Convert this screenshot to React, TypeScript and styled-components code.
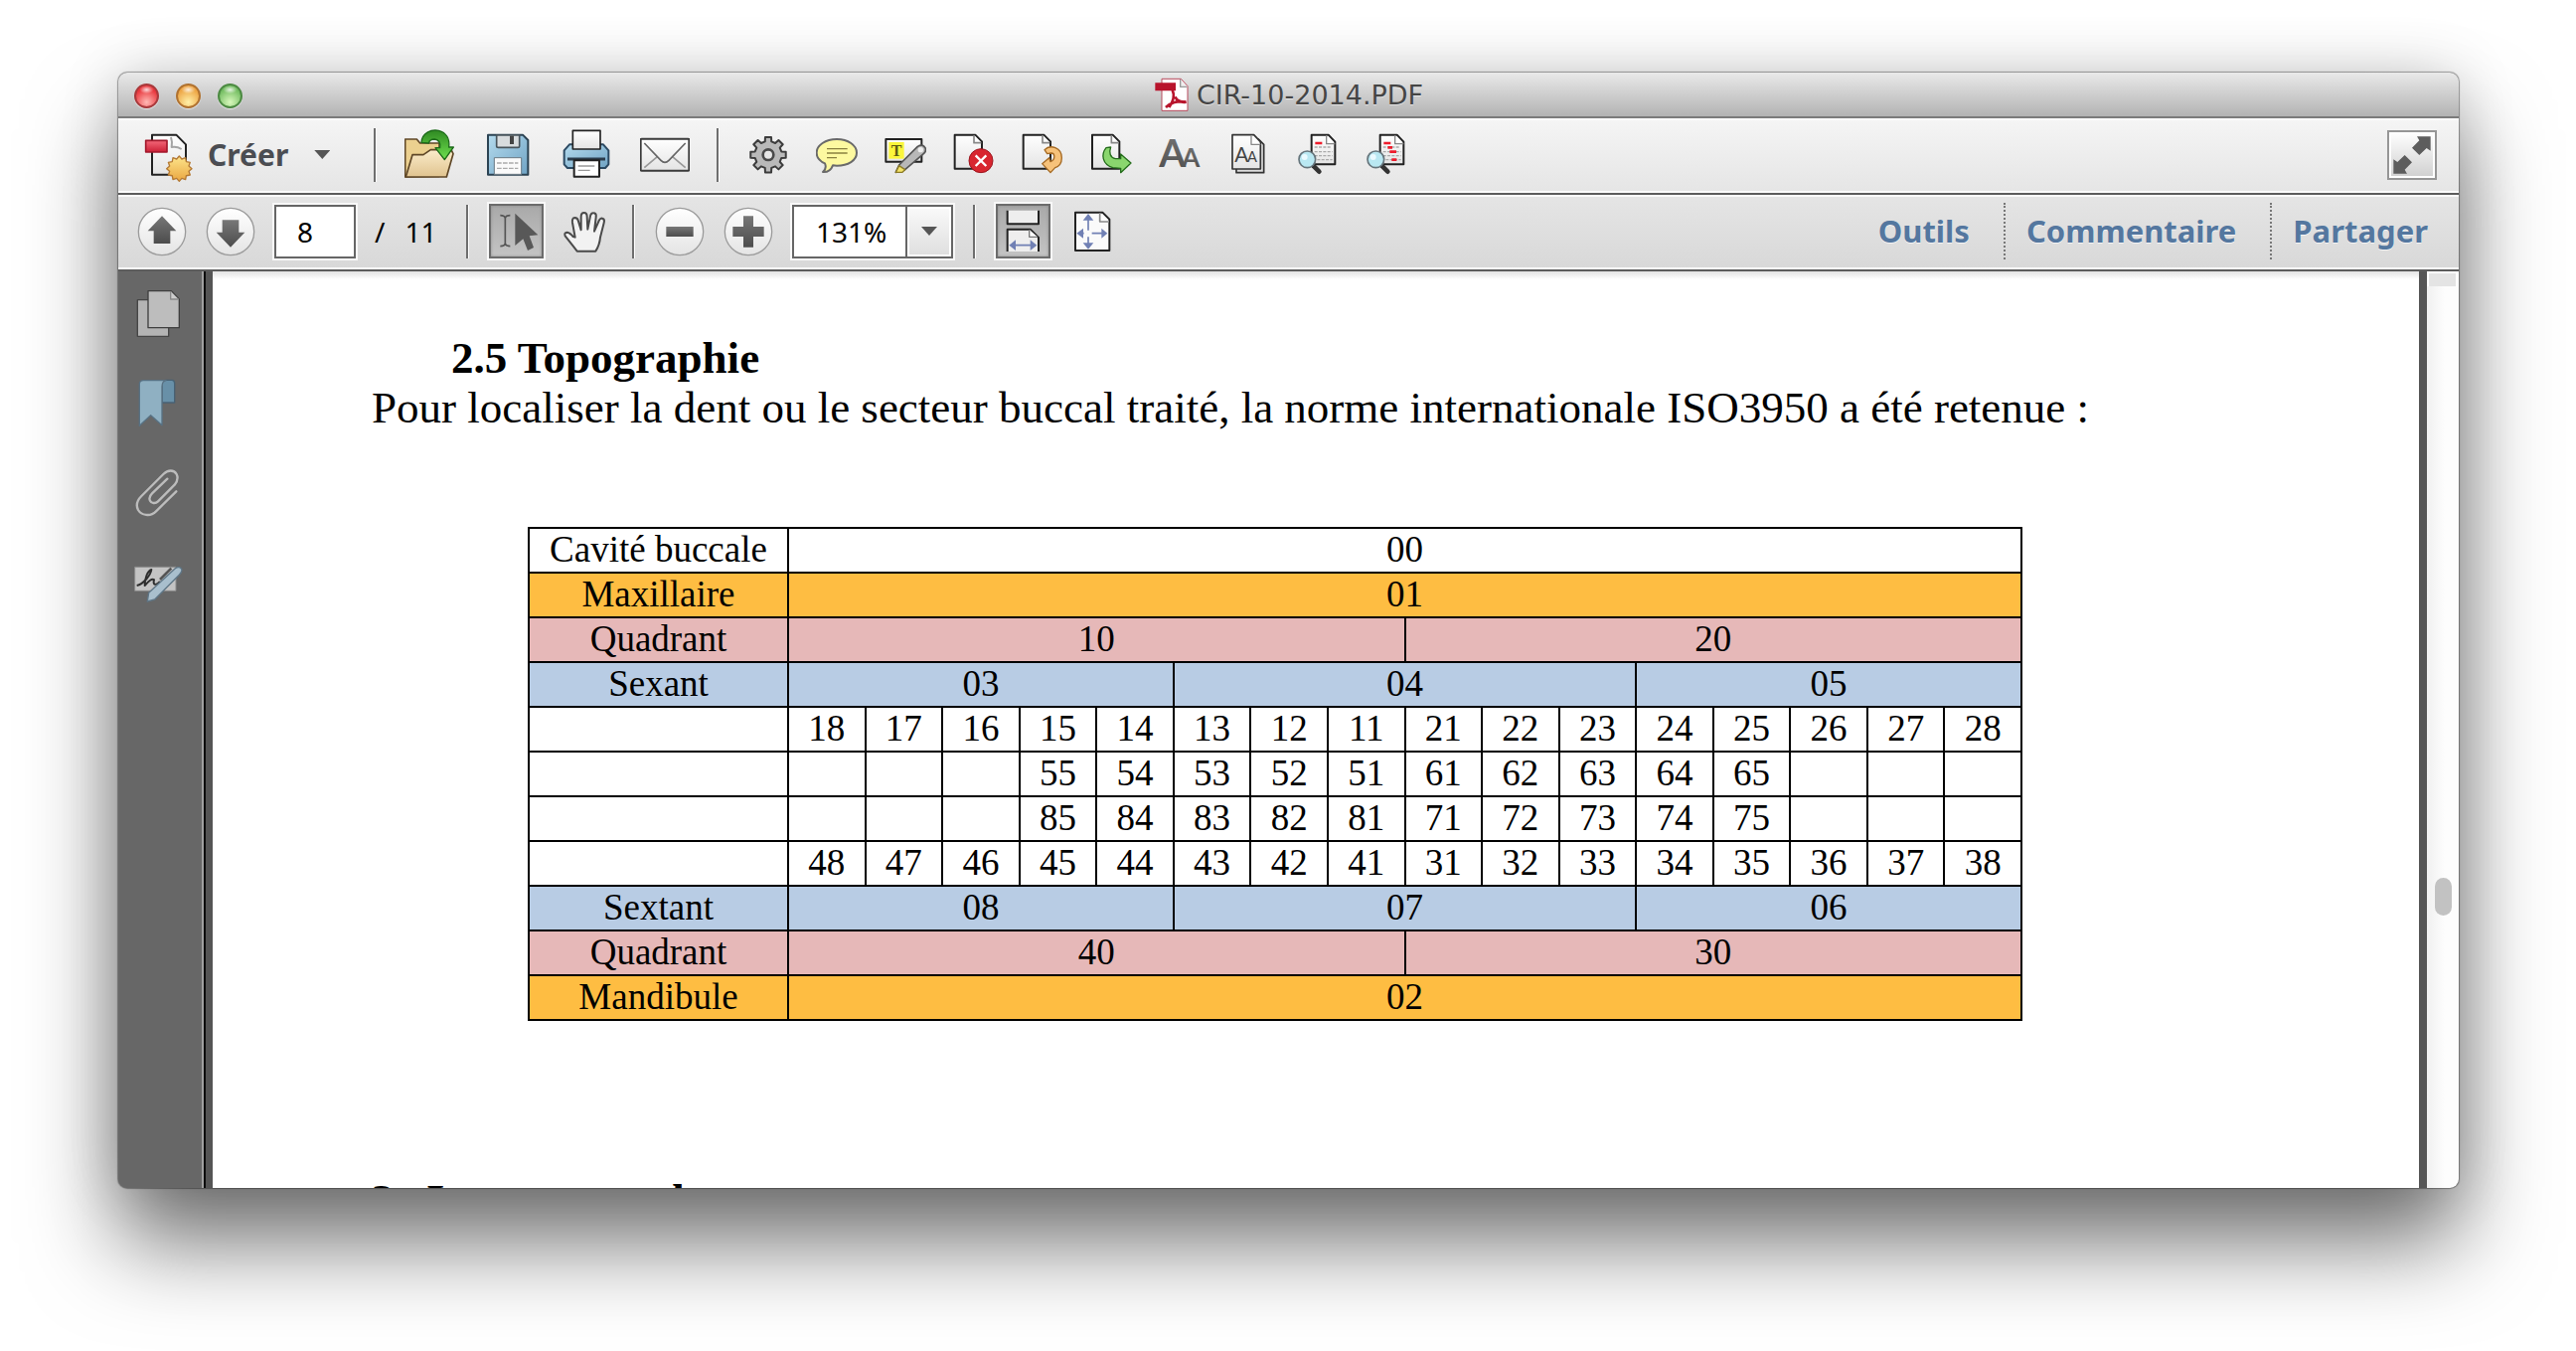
import React from "react";
import styled, { createGlobalStyle, css } from "styled-components";

const uiFont = `"Noto Sans", "Open Sans", sans-serif`;
const docFont = `"Liberation Serif", "Times New Roman", serif`;

const GlobalStyle = createGlobalStyle`
  *, *::before, *::after { box-sizing: border-box; }
  body { margin: 0; background: #fff; }
  button, input, select { margin: 0; font: inherit; color: inherit; }
`;

const Desktop = styled.main`
  display: flex;
  height: 100vh;
  padding: 73px 118px 164px 119px;
  overflow: hidden;
`;

const Window = styled.section`
  flex: 1;
  display: flex;
  flex-direction: column;
  min-width: 0;
  overflow: hidden;
  border-radius: 9px;
  background: #676767;
  font-family: ${uiFont};
  box-shadow: 0 0 1px 1px rgba(0, 0, 0, 0.35), 0 56px 90px rgba(0, 0, 0, 0.54), 0 0 60px rgba(0, 0, 0, 0.16);
`;

/* ---------- title bar ---------- */

const TitleBar = styled.header`
  display: grid;
  grid-template-columns: 1fr auto 1fr;
  align-items: center;
  height: 46px;
  padding: 2px 16px 0;
  background: linear-gradient(#e9e9e9, #b3b3b3);
  border-bottom: 2px solid #7b7b7b;
`;

const Lights = styled.div`
  display: flex;
  gap: 17px;
`;

const Light = styled.button<{ $rim: string; $core: string; $glow: string }>`
  width: 25px;
  height: 25px;
  padding: 0;
  border: 2px solid ${(p) => p.$rim};
  border-radius: 50%;
  background: radial-gradient(ellipse 7px 4px at 50% 20%, #ffffffd0, #ffffff00),
    radial-gradient(circle at 50% 80%, ${(p) => p.$glow}, ${(p) => p.$core} 70%);
  box-shadow: 0 1px 1px #ffffffa0;
`;

const Title = styled.h1`
  display: flex;
  align-items: center;
  gap: 7px;
  margin: 0;
  font: 400 27px/32px "DejaVu Sans", sans-serif;
  color: #454545;
  text-shadow: 0 1px 0 #ffffff90;
`;

/* ---------- toolbars ---------- */

const Toolbar = styled.div<{ $dark?: boolean }>`
  display: flex;
  align-items: center;
  height: 77px;
  padding: 0 22px 2px 19px;
  border-bottom: 2px solid #5c5c5c;
  background: ${(p) => (p.$dark ? "linear-gradient(#e5e5e5, #d8d8d8)" : "linear-gradient(#f5f5f5, #e5e5e5)")};
  box-shadow: inset 0 2px 0 #fbfbfb, inset 0 -2px 0 #fbfbfb;
  gap: ${(p) => (p.$dark ? "19px" : "0")};
`;

const Divider = styled.span<{ $wide?: boolean }>`
  flex: none;
  width: 3px;
  height: 54px;
  margin: ${(p) => (p.$wide ? "0 28px 0 27px" : "0 1px")};
  background: #6e6e6e;
  border-right: 1px solid #fff;
`;

const IconButton = styled.button<{ $pressed?: boolean }>`
  flex: none;
  display: grid;
  place-items: center;
  padding: 0;
  border: 0;
  background: none;
  svg { display: block; }
  ${(p) =>
    p.$pressed &&
    css`
      width: 55px;
      height: 55px;
      border: 2px solid #6c6c6c;
      background: linear-gradient(#a9a9a9, #c4c4c4);
      box-shadow: 0 0 0 2px #f8f8f8, inset 0 0 3px #8a8a8a;
    `}
`;

const Group = styled.div<{ $gap: number }>`
  display: flex;
  align-items: center;
  gap: ${(p) => p.$gap}px;
`;

const CreateButton = styled.button`
  display: flex;
  align-items: center;
  gap: 15px;
  padding: 0 17px 0 0;
  border: 0;
  background: none;
  font: 700 30px/40px ${uiFont};
  color: #4b4d52;
`;

const Caret = styled.span`
  width: 16px;
  height: 9px;
  margin-left: 11px;
  background: #555;
  clip-path: polygon(0 0, 100% 0, 50% 100%);
`;

const FullScreen = styled(IconButton)`
  width: 50px;
  height: 50px;
  margin-left: auto;
  border: 2px solid #969696;
  background: linear-gradient(#fff, #cfcfcf);
  box-shadow: inset 0 0 0 2px #fff;
`;

const PageInput = styled.input`
  flex: none;
  width: 82px;
  height: 54px;
  padding: 0 0 0 21px;
  border: 2px solid #666;
  border-radius: 0;
  background: #fff;
  box-shadow: 0 0 0 2px #f8f8f8;
  font-size: 28px;
  color: #000;
`;

const PageTotal = styled.div`
  flex: none;
  display: flex;
  gap: 20px;
  width: 72px;
  font-size: 28px;
  line-height: 40px;
`;

const ZoomBox = styled.div`
  flex: none;
  position: relative;
  width: 162px;
  height: 54px;
  border: 2px solid #666;
  background: #fff;
  box-shadow: 0 0 0 2px #f8f8f8;
`;

const ZoomSelect = styled.select`
  width: 100%;
  height: 100%;
  padding: 0 0 0 22px;
  border: 0;
  appearance: none;
  background: transparent;
  font-size: 28px;
  color: #000;
`;

const ZoomArrow = styled.span`
  position: absolute;
  inset: 0 0 0 auto;
  display: grid;
  place-items: center;
  width: 46px;
  border-left: 2px solid #666;
  background: linear-gradient(#fafafa, #dedede);
  box-shadow: inset 0 0 0 2px #fff;
  pointer-events: none;
  ${Caret} { margin: 0; }
`;

const Panes = styled.nav`
  display: flex;
  align-items: center;
  margin-left: auto;
  padding-right: 9px;
`;

const PaneLink = styled.a`
  padding: 0 34px 0 21px;
  font: 700 31px/57px ${uiFont};
  color: #54779f;
  text-decoration: none;
  text-shadow: 0 1px 0 #ffffffb0;
  & + & { border-left: 2px dotted #777; }
  &:last-child { padding-right: 0; }
`;

/* ---------- body ---------- */

const Body = styled.div`
  flex: 1;
  display: flex;
  min-height: 0;
`;

const Sidebar = styled.aside`
  flex: none;
  display: flex;
  flex-direction: column;
  gap: 40px;
  width: 95px;
  padding: 18px 0 0 15px;
  background: linear-gradient(90deg, #676767 84px, #a0a0a0 84px, #a0a0a0 86px, #0c0c0c 86px, #0c0c0c 88px, #555 88px);
  ${IconButton} { justify-content: start; }
`;

const Page = styled.article`
  flex: 1;
  min-width: 0;
  overflow: hidden;
  padding: 62px 160px 0;
  background: linear-gradient(#e2e2e2, #fff 8px);
  font: 45px/50px ${docFont};
  color: #000;
`;

const SectionTitle = styled.h2`
  margin: 0;
  padding-left: 80px;
  font: inherit;
  font-weight: 700;
`;

const NextSection = styled.h2`
  display: flex;
  gap: 22px;
  margin: 155px 0 0;
  font: inherit;
  font-weight: 700;
  white-space: nowrap;
`;

const Paragraph = styled.p`
  margin: 0 0 95px;
  white-space: nowrap;
`;

const TeethTable = styled.table`
  width: 1504px;
  margin-left: 157px;
  border-collapse: collapse;
  table-layout: fixed;
  font-size: 37px;
  line-height: 40px;
  text-align: center;
`;

const LabelCol = styled.col`
  width: 261px;
`;

const tones = { plain: "#fff", orange: "#febd42", pink: "#e6b8b8", blue: "#b8cce4" };
type Tone = keyof typeof tones;

const Row = styled.tr<{ $tone: Tone }>`
  height: 45px;
  background: ${(p) => tones[p.$tone]};
  th, td {
    padding: 0 0 2px;
    border: 2px solid #000;
    font-weight: 400;
  }
`;

const ScrollTrack = styled.div`
  flex: none;
  width: 40px;
  padding-left: 8px;
  background: linear-gradient(90deg, #555 8px, #f0f0f0 8px, #fdfdfd 26px);
`;

const Splitter = styled.div`
  height: 15px;
  border: solid #fff;
  border-width: 2px 3px 0 2px;
  background: #e4e4e4;
`;

const Thumb = styled.div`
  width: 17px;
  height: 38px;
  margin: 595px 0 0 8px;
  border-radius: 9px;
  background: #c2c2c2;
`;

/* ---------- icons ---------- */

type IconProps = { x: number; y: number; w?: number; h?: number; children: React.ReactNode };

/* Artwork is drawn on a grid three times finer than the screen. */
const Icon = ({ x, y, w = 50, h = 54, children }: IconProps) => (
  <svg width={w} height={h} viewBox={`${x} ${y} ${w * 3} ${h * 3}`} fill="none" strokeLinejoin="round" aria-hidden="true">
    {children}
  </svg>
);

const HiddenSvg = styled.svg`
  position: absolute;
`;

const Gradients = () => (
  <HiddenSvg width="0" height="0" aria-hidden="true">
    <defs>
      <linearGradient id="paper" x1="0" y1="0" x2="0" y2="1"><stop stopColor="#fff" /><stop offset="1" stopColor="#e4e4e4" /></linearGradient>
      <linearGradient id="steel" x1="0" y1="0" x2="0" y2="1"><stop stopColor="#777" /><stop offset="1" stopColor="#4c4c4c" /></linearGradient>
      <linearGradient id="manila" x1="0" y1="0" x2="0" y2="1"><stop stopColor="#fbeccb" /><stop offset="1" stopColor="#e0c38f" /></linearGradient>
      <linearGradient id="green" x1="0" y1="0" x2="0" y2="1"><stop stopColor="#2f8a22" /><stop offset="1" stopColor="#6fe04f" /></linearGradient>
      <linearGradient id="blue" x1="0" y1="0" x2="1" y2="1"><stop stopColor="#b5dbee" /><stop offset="1" stopColor="#6fa3c4" /></linearGradient>
      <linearGradient id="gold" x1="0" y1="0" x2="0" y2="1"><stop stopColor="#fde58c" /><stop offset="1" stopColor="#eaa640" /></linearGradient>
      <linearGradient id="red" x1="0" y1="0" x2="0" y2="1"><stop stopColor="#f4697a" /><stop offset="1" stopColor="#cc1f35" /></linearGradient>
    </defs>
  </HiddenSvg>
);

const SheetBase = ({ x, y }: { x: number; y: number }) => (
  <g transform={`translate(${x} ${y})`}>
    <path d="M2 2H64L84 22V104H2Z" fill="url(#paper)" stroke="#222" strokeWidth="6" />
    <path d="M60 4V26H82" fill="#fff" stroke="#888" strokeWidth="5" />
  </g>
);

const PdfIcon = () => (
  <Icon x={280} y={54} w={36} h={36}>
    <path d="M304 58H362L382 80V154H304Z" fill="#fff" stroke="#b84a5c" strokeWidth="3" />
    <path d="M360 60V82H380" fill="#eee" stroke="#999" strokeWidth="4" />
    <path d="M284 70H346V94H284Z" fill="#b8142c" />
    <path d="M336 92C342 104 344 118 326 144M316 144C328 132 352 122 376 128M344 112C350 124 362 130 378 128" stroke="#b8142c" strokeWidth="8" />
  </Icon>
);

const sunPoints = Array.from({ length: 24 }, (_, i) => {
  const r = i % 2 ? 30 : 38;
  const a = (i * Math.PI) / 12;
  return `${(241 + r * Math.sin(a)).toFixed(1)},${(331 - r * Math.cos(a)).toFixed(1)}`;
}).join(" ");

const CreateIcon = () => (
  <Icon x={114} y={209} w={56}>
    <path d="M159 229H232L261 258V349H159Z" fill="url(#paper)" stroke="#222" strokeWidth="6" />
    <path d="M216 236C220 248 220 256 218 266C228 264 238 266 248 272" stroke="#a5a5a5" strokeWidth="6" />
    <rect x="140" y="246" width="64" height="35" fill="url(#red)" stroke="#a2192c" strokeWidth="5" />
    <polygon points={sunPoints} fill="url(#gold)" stroke="#b47a35" strokeWidth="4" />
  </Icon>
);

const FolderIcon = () => (
  <Icon x={109} y={59}>
    <path d="M111 206V92H146L156 104H214V204Z" fill="#ecd08f" stroke="#5f4727" strokeWidth="5" />
    <path d="M113 206L133 139H166L188 124H250L256 136L236 206Z" fill="url(#manila)" stroke="#5f4727" strokeWidth="5" />
    <path d="M160 102C162 72 190 62 212 66C236 72 246 92 243 116H257L230 154L202 118H216C218 104 212 94 200 92C190 92 184 96 182 104Z" fill="url(#green)" stroke="#1d6b1a" strokeWidth="4" />
  </Icon>
);

const SaveIcon = () => (
  <Icon x={346} y={59}>
    <path d="M361 79H466L482 95V199H361Z" fill="url(#blue)" stroke="#2c4353" strokeWidth="6" />
    <path d="M387 80H456V112Q456 117 451 117H392Q387 117 387 112Z" fill="#d8dcde" stroke="#49555c" strokeWidth="5" />
    <rect x="427" y="82" width="12" height="25" fill="#444" />
    <rect x="380" y="148" width="82" height="50" fill="#fafafa" stroke="#6a7a84" strokeWidth="3" />
    <path d="M388 164H452M388 180H452" stroke="#aaa" strokeWidth="4" strokeDasharray="14 4" />
  </Icon>
);

const PrintIcon = () => (
  <Icon x={584} y={59}>
    <path d="M608 108H710L726 126V168L716 179H602L592 168V126Z" fill="url(#blue)" stroke="#2c4a63" strokeWidth="6" />
    <path d="M618 66H701V122H618Z" fill="url(#paper)" stroke="#222" strokeWidth="5" />
    <path d="M602 152H716" stroke="#2b3c4c" strokeWidth="9" />
    <path d="M622 156H698V205H622Z" fill="#fff" stroke="#222" strokeWidth="6" />
    <path d="M634 173H684M634 186H670" stroke="#999" strokeWidth="4" />
  </Icon>
);

const MailIcon = () => (
  <Icon x={821} y={59}>
    <rect x="823" y="91" width="146" height="96" rx="3" fill="url(#paper)" stroke="#3a3a3a" strokeWidth="6" />
    <path d="M834 178L874 144M958 178L918 144" stroke="#999" strokeWidth="5" />
    <path d="M834 104L884 156Q896 168 908 156L958 104" stroke="#666" strokeWidth="5" />
  </Icon>
);

const gearPath = (() => {
  const pts: string[] = [];
  for (let i = 0; i < 8; i++) {
    const base = (i * Math.PI) / 4;
    [[-0.24, 41], [-0.17, 54], [0.17, 54], [0.24, 41]].forEach(([d, r]) => {
      pts.push(`${(136 + r * Math.sin(base + d)).toFixed(1)},${(139 - r * Math.cos(base + d)).toFixed(1)}`);
    });
  }
  return pts.join(" ");
})();

const GearIcon = () => (
  <Icon x={73} y={59} w={42}>
    <polygon points={gearPath} fill="#b9b9b9" stroke="#3c3c3c" strokeWidth="6" />
    <circle cx="136" cy="139" r="16" fill="#e6e6e6" stroke="#4a4a4a" strokeWidth="8" />
  </Icon>
);

const CommentIcon = () => (
  <Icon x={279} y={59} w={42}>
    <path d="M342 92C376 92 402 110 402 133C402 156 376 172 342 172L330 171C326 182 316 192 300 191C308 184 310 174 306 165C290 158 281 146 281 133C281 110 308 92 342 92Z" fill="#fdf9a0" stroke="#6a6a6a" strokeWidth="6" />
    <path d="M312 121H374M312 134H374M312 148H342" stroke="#8a8140" strokeWidth="4" />
  </Icon>
);

const HighlightIcon = () => (
  <Icon x={484} y={59} w={42}>
    <rect x="488" y="92" width="108" height="68" fill="url(#paper)" stroke="#222" strokeWidth="6" />
    <rect x="497" y="101" width="46" height="50" fill="#fbf63c" />
    <text x="520" y="143" textAnchor="middle" fontFamily="Liberation Serif, serif" fontWeight="700" fontSize="48" fill="#5c5a14">T</text>
    <path d="M518 192L528 170L584 114Q600 104 608 120Q610 130 602 136L546 184Z" fill="#b8b8b8" stroke="#555" strokeWidth="5" />
    <path d="M518 192L528 172L546 184L538 192Z" fill="#f4e36a" stroke="#8d7c26" strokeWidth="4" />
    <circle cx="593" cy="124" r="8" fill="#eee" />
  </Icon>
);

const DeletePageIcon = () => (
  <Icon x={689} y={59} w={42}>
    <SheetBase x={692} y={77} />
    <circle cx="773" cy="157" r="36" fill="#d8262f" stroke="#9b161f" strokeWidth="3" />
    <path d="M757 141L789 173M789 141L757 173" stroke="#fff" strokeWidth="7" />
  </Icon>
);

const RotatePageIcon = () => (
  <Icon x={895} y={59} w={42}>
    <SheetBase x={898} y={77} />
    <path d="M964 124C982 106 1016 118 1016 148C1016 162 1008 174 996 178L982 193L957 166L978 148L982 160C998 154 996 134 984 134L972 136Z" fill="#f7c27a" stroke="#a56a24" strokeWidth="4" />
  </Icon>
);

const ExportPageIcon = () => (
  <Icon x={110} y={209} w={42}>
    <SheetBase x={114} y={227} />
    <path d="M158 268C142 288 146 318 178 328L202 330V343L233 314L202 287V301H186C170 298 166 282 172 266Z" fill="#8ad66e" stroke="#256d1c" strokeWidth="4" />
  </Icon>
);

const FontsIcon = () => (
  <Icon x={321} y={209} w={42}>
    <text x="322" y="327" fontFamily="Lato, sans-serif" fontWeight="700" fontSize="116" fill="url(#steel)">A</text>
    <text x="391" y="327" fontFamily="Lato, sans-serif" fontWeight="700" fontSize="78" fill="url(#steel)">A</text>
  </Icon>
);

const FontPagesIcon = () => (
  <Icon x={526} y={209} w={42}>
    <path d="M553 242H620L636 258V343H553Z" fill="#ddd" stroke="#333" strokeWidth="5" />
    <path d="M541 229H606L626 250V332H541Z" fill="url(#paper)" stroke="#333" strokeWidth="5" />
    <path d="M598 230V258H626" fill="#fff" stroke="#888" strokeWidth="4" />
    <text x="548" y="312" fontFamily="Lato, sans-serif" fontSize="62" fill="#444">A</text>
    <text x="586" y="312" fontFamily="Lato, sans-serif" fontSize="44" fill="#444">A</text>
  </Icon>
);

const SearchPage = ({ marks }: { marks: string }) => (
  <>
    <path d="M779 229H830L850 250V318H779Z" fill="url(#paper)" stroke="#222" strokeWidth="6" />
    <path d="M788 266H838M788 280H842M788 292H842M796 304H842" stroke="#aaa" strokeWidth="4" strokeDasharray="9 4" />
    <path d="M824 231V256H850" fill="#fff" stroke="#888" strokeWidth="4" />
    <path d={marks} stroke="#ee1c2c" strokeWidth="8" />
    <path d="M784 322L802 340" stroke="#333" strokeWidth="14" strokeLinecap="round" />
    <circle cx="766" cy="303" r="25" fill="#b9e8f2" stroke="#66757c" strokeWidth="5" />
    <circle cx="758" cy="296" r="9" fill="#eafaff" />
  </>
);

const SearchIcon = () => (
  <Icon x={732} y={209} w={42}><SearchPage marks="M790 254H811" /></Icon>
);

const SearchAllIcon = () => (
  <Icon x={732} y={209} w={42}><SearchPage marks="M790 254H811M802 267H816M808 280H828M814 304H829" /></Icon>
);

const FullScreenIcon = () => (
  <Icon x={0} y={0} w={42} h={42}>
    <path d="M78 7H119V50L107 42L85 63L63 41L85 19Z" fill="#5d5d5d" />
    <path d="M48 119H7V76L19 84L41 63L63 85L41 107Z" fill="#5d5d5d" />
  </Icon>
);

const RoundIcon = ({ d }: { d: string }) => (
  <Icon x={0} y={0} h={50}>
    <circle cx="75" cy="75" r="71" fill="url(#paper)" stroke="#9b9b9b" strokeWidth="4" />
    <path d={d} fill="url(#steel)" />
  </Icon>
);

const SelectIcon = () => (
  <Icon x={371} y={295} h={50}>
    <path d="M396 321Q410 321 411 330Q412 321 426 321M411 330V405M396 414Q410 414 411 405Q412 414 426 414" stroke="#555" strokeWidth="5" />
    <path d="M441 315L510 380L484 383L497 418L479 427L465 392L441 412Z" fill="#585858" />
  </Icon>
);

const HandIcon = () => (
  <Icon x={584} y={292} h={50}>
    <path d="M628 426L614 408L592 380Q588 370 598 369Q606 370 616 382L622 384L614 340Q612 326 621 325Q630 325 632 336L640 362L640 322Q640 310 649 310Q658 310 658 322L660 360L668 320Q671 308 680 311Q687 313 685 324L680 366L694 334Q699 324 706 328Q712 331 709 341L698 384Q696 408 684 426Z" fill="#f2f2f2" stroke="#4a4a4a" strokeWidth="6" />
  </Icon>
);

const FitWidthIcon = () => (
  <Icon x={825} y={295} h={50}>
    <path d="M851 306V347H945V306" fill="#eee" stroke="#222" strokeWidth="6" />
    <path d="M851 430V363H920L945 388V430" fill="#eee" stroke="#222" strokeWidth="6" />
    <path d="M917 364V386H942" fill="#fff" stroke="#777" strokeWidth="4" />
    <path d="M870 411H926" stroke="#7080b4" strokeWidth="5" />
    <path d="M856 411L876 395V427ZM940 411L920 395V427Z" fill="#7080b4" />
  </Icon>
);

const FitPageIcon = () => (
  <Icon x={48} y={443} h={50}>
    <path d="M66 460H148L169 481V575H66Z" fill="#fafafa" stroke="#222" strokeWidth="6" />
    <path d="M140 462V488H168" fill="#fff" stroke="#888" strokeWidth="5" />
    <path d="M105 482V514M105 534V556M92 523H84M116 523H150" stroke="#7080b4" strokeWidth="5" />
    <path d="M105 464L121 484H89ZM105 571L121 552H89ZM70 523L90 508V538ZM163 523L145 508V538Z" fill="#7080b4" />
  </Icon>
);

const PagesIcon = () => (
  <Icon x={73} y={94} h={50}>
    <rect x="86" y="126" width="94" height="110" fill="#b4b4b4" stroke="#464646" strokeWidth="4" />
    <path d="M118 99H188L212 124V210H118Z" fill="#bdbdbd" stroke="#3f3f3f" strokeWidth="4" />
    <path d="M186 100V124H210" fill="#ccc" stroke="#888" strokeWidth="4" />
  </Icon>
);

const BookmarkIcon = () => (
  <Icon x={73} y={364} h={50}>
    <path d="M160 372Q164 368 172 368H190Q198 368 198 378V436H160Z" fill="#6890a8" stroke="#486274" strokeWidth="4" />
    <path d="M92 380Q92 369 104 369H172Q160 372 160 388V504L126 474L92 506Z" fill="#8fb0c2" stroke="#587284" strokeWidth="4" />
  </Icon>
);

const ClipIcon = () => (
  <Icon x={73} y={628} h={50}>
    <path d="M203 698L142 758C124 776 98 770 88 754C80 738 86 724 98 712L164 646C178 632 196 632 204 646C210 658 206 668 198 678L148 728C140 736 128 734 124 726C120 718 124 710 130 704L176 660" stroke="#bcbcbc" strokeWidth="7" strokeLinecap="round" />
  </Icon>
);

const SignIcon = () => (
  <Icon x={69} y={904} h={50}>
    <rect x="74" y="932" width="124" height="72" fill="#c4c4c4" stroke="#8c8c8c" strokeWidth="3" />
    <path d="M80 988C100 984 122 956 124 940C112 944 104 966 104 988C112 980 122 964 132 970C128 986 136 990 150 976" stroke="#2e2e2e" strokeWidth="6" />
    <path d="M150 970L184 936" stroke="#555" strokeWidth="8" />
    <path d="M112 1036L116 1010L196 936Q210 928 216 940Q216 948 208 956L134 1030Z" fill="#a9bfcd" stroke="#5f7686" strokeWidth="4" />
  </Icon>
);

/* ---------- data ---------- */

const fileTools: [string, React.FC][] = [
  ["Ouvrir", FolderIcon],
  ["Enregistrer", SaveIcon],
  ["Imprimer", PrintIcon],
  ["Envoyer", MailIcon],
];

const quickTools: [string, React.FC][] = [
  ["Préférences", GearIcon],
  ["Note", CommentIcon],
  ["Surligner", HighlightIcon],
  ["Supprimer les pages", DeletePageIcon],
  ["Faire pivoter", RotatePageIcon],
  ["Extraire", ExportPageIcon],
  ["Police", FontsIcon],
  ["Polices du document", FontPagesIcon],
  ["Rechercher", SearchIcon],
  ["Rechercher tout", SearchAllIcon],
];

const sideTools: [string, React.FC][] = [
  ["Vignettes", PagesIcon],
  ["Signets", BookmarkIcon],
  ["Pièces jointes", ClipIcon],
  ["Signatures", SignIcon],
];

const blank = ["", "", ""];
const rows: { label: string; tone: Tone; cells: string[]; spans?: number[] }[] = [
  { label: "Cavité buccale", tone: "plain", cells: ["00"], spans: [16] },
  { label: "Maxillaire", tone: "orange", cells: ["01"], spans: [16] },
  { label: "Quadrant", tone: "pink", cells: ["10", "20"], spans: [8, 8] },
  { label: "Sexant", tone: "blue", cells: ["03", "04", "05"], spans: [5, 6, 5] },
  { label: "", tone: "plain", cells: "18 17 16 15 14 13 12 11 21 22 23 24 25 26 27 28".split(" ") },
  { label: "", tone: "plain", cells: [...blank, ..."55 54 53 52 51 61 62 63 64 65".split(" "), ...blank] },
  { label: "", tone: "plain", cells: [...blank, ..."85 84 83 82 81 71 72 73 74 75".split(" "), ...blank] },
  { label: "", tone: "plain", cells: "48 47 46 45 44 43 42 41 31 32 33 34 35 36 37 38".split(" ") },
  { label: "Sextant", tone: "blue", cells: ["08", "07", "06"], spans: [5, 6, 5] },
  { label: "Quadrant", tone: "pink", cells: ["40", "30"], spans: [8, 8] },
  { label: "Mandibule", tone: "orange", cells: ["02"], spans: [16] },
];

export default function App() {
  return (
    <Desktop>
      <GlobalStyle />
      <Gradients />
      <Window>
        <TitleBar>
          <Lights>
            <Light aria-label="Fermer" $rim="#a83a3c" $core="#e8363c" $glow="#ffb9b4" />
            <Light aria-label="Réduire" $rim="#b07230" $core="#eda544" $glow="#fff0a8" />
            <Light aria-label="Agrandir" $rim="#4c8a42" $core="#74bd62" $glow="#d8f8bc" />
          </Lights>
          <Title><PdfIcon />CIR-10-2014.PDF</Title>
        </TitleBar>

        <Toolbar>
          <CreateButton><CreateIcon />Créer<Caret /></CreateButton>
          <Divider $wide />
          <Group $gap={29}>
            {fileTools.map(([name, Glyph]) => (
              <IconButton key={name} aria-label={name}><Glyph /></IconButton>
            ))}
          </Group>
          <Divider $wide />
          <Group $gap={27}>
            {quickTools.map(([name, Glyph]) => (
              <IconButton key={name} aria-label={name}><Glyph /></IconButton>
            ))}
          </Group>
          <FullScreen aria-label="Mode Lecture"><FullScreenIcon /></FullScreen>
        </Toolbar>

        <Toolbar $dark>
          <IconButton aria-label="Page précédente"><RoundIcon d="M75 28L118 73H100V111H50V73H32Z" /></IconButton>
          <IconButton aria-label="Page suivante"><RoundIcon d="M75 122L118 77H100V40H50V77H32Z" /></IconButton>
          <PageInput aria-label="Page" defaultValue="8" />
          <PageTotal><span>/</span><span>11</span></PageTotal>
          <Divider />
          <IconButton $pressed aria-label="Sélection"><SelectIcon /></IconButton>
          <IconButton aria-label="Main"><HandIcon /></IconButton>
          <Divider />
          <IconButton aria-label="Zoom arrière"><RoundIcon d="M34 60H116V90H34Z" /></IconButton>
          <IconButton aria-label="Zoom avant"><RoundIcon d="M60 28H90V60H122V90H90V122H60V90H28V60H60Z" /></IconButton>
          <ZoomBox>
            <ZoomSelect aria-label="Facteur de zoom" defaultValue="131%">
              <option>131%</option>
            </ZoomSelect>
            <ZoomArrow><Caret /></ZoomArrow>
          </ZoomBox>
          <Divider />
          <IconButton $pressed aria-label="Pleine largeur"><FitWidthIcon /></IconButton>
          <IconButton aria-label="Page entière"><FitPageIcon /></IconButton>
          <Panes>
            <PaneLink href="#outils">Outils</PaneLink>
            <PaneLink href="#commentaire">Commentaire</PaneLink>
            <PaneLink href="#partager">Partager</PaneLink>
          </Panes>
        </Toolbar>

        <Body>
          <Sidebar>
            {sideTools.map(([name, Glyph]) => (
              <IconButton key={name} aria-label={name}><Glyph /></IconButton>
            ))}
          </Sidebar>
          <Page>
            <SectionTitle>2.5 Topographie</SectionTitle>
            <Paragraph>
              Pour localiser la dent ou le secteur buccal traité, la norme internationale ISO3950 a été retenue :
            </Paragraph>
            <TeethTable>
              <colgroup>
                <LabelCol />
                {Array.from({ length: 16 }, (_, i) => <col key={i} />)}
              </colgroup>
              <tbody>
                {rows.map((row, r) => (
                  <Row key={r} $tone={row.tone}>
                    <th scope="row">{row.label}</th>
                    {row.cells.map((cell, c) => (
                      <td key={c} colSpan={row.spans ? row.spans[c] : 1}>{cell}</td>
                    ))}
                  </Row>
                ))}
              </tbody>
            </TeethTable>
            <NextSection><span>3.</span><span>La cote aux dos</span></NextSection>
          </Page>
          <ScrollTrack>
            <Splitter />
            <Thumb />
          </ScrollTrack>
        </Body>
      </Window>
    </Desktop>
  );
}
